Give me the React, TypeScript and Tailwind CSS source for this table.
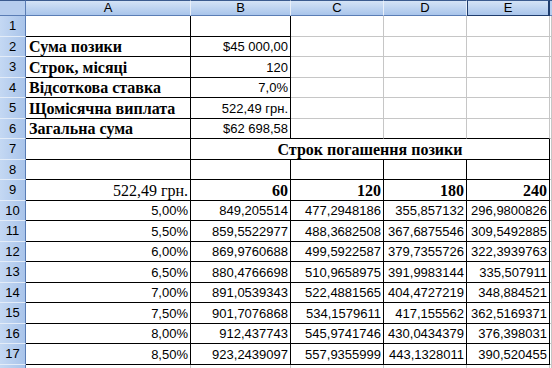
import React from "react";

type CellKind = "label" | "num" | "serifNum" | "boldNum" | "title" | "empty";

const info: [string, string][] = [
  ["", ""],
  ["Сума позики", "$45 000,00"],
  ["Строк, місяці", "120"],
  ["Відсоткова ставка", "7,0%"],
  ["Щомісячна виплата", "522,49 грн."],
  ["Загальна сума", "$62 698,58"],
];

const table: string[][] = [
  ["5,00%", "849,205514", "477,2948186", "355,857132", "296,9800826"],
  ["5,50%", "859,5522977", "488,3682508", "367,6875546", "309,5492885"],
  ["6,00%", "869,9760688", "499,5922587", "379,7355726", "322,3939763"],
  ["6,50%", "880,4766698", "510,9658975", "391,9983144", "335,507911"],
  ["7,00%", "891,0539343", "522,4881565", "404,4727219", "348,884521"],
  ["7,50%", "901,7076868", "534,1579611", "417,155562", "362,5169371"],
  ["8,00%", "912,437743", "545,9741746", "430,0434379", "376,398031"],
  ["8,50%", "923,2439097", "557,9355999", "443,1328011", "390,520455"],
];

const kindClasses: Record<CellKind, string> = {
  label: "[font-family:'Liberation_Serif',serif] font-bold text-[16px] justify-start pl-[3px]",
  num: "[font-family:'Liberation_Sans',sans-serif] text-[13px] justify-end pr-[2px]",
  serifNum: "[font-family:'Liberation_Serif',serif] text-[16px] justify-end pr-[2px]",
  boldNum: "[font-family:'Liberation_Serif',serif] font-bold text-[16px] justify-end pr-[2px]",
  title: "[font-family:'Liberation_Serif',serif] font-bold text-[16px] justify-center",
  empty: "",
};

// A1:B6 and A7:E17 carry black borders, the rest is plain grid
function bordered(r: number, c: number) {
  if (r >= 1 && r <= 6 && c >= 1 && c <= 2) return true;
  if (r >= 7 && r <= 17 && c >= 1 && c <= 5) return true;
  return false;
}

function Cell({
  r,
  c,
  lastCol,
  kind = "empty",
  span,
  children,
}: {
  r: number;
  c: number;
  lastCol?: number;
  kind?: CellKind;
  span?: boolean;
  children?: React.ReactNode;
}) {
  const endCol = lastCol ?? c;
  const right = bordered(r, endCol) || bordered(r, endCol + 1);
  const bottom = bordered(r, c) || bordered(r + 1, c);
  return (
    <div
      className={`flex items-end overflow-hidden whitespace-nowrap pb-[1px] leading-[17px] text-black border-r border-b ${
        right ? "border-r-black" : "border-r-[#c6c6c6]"
      } ${bottom ? "border-b-black" : "border-b-[#c6c6c6]"} ${span ? "col-span-4" : ""} ${kindClasses[kind]}`}
    >
      {children}
    </div>
  );
}

function RowHead({ n }: { n?: number }) {
  return (
    <div className="flex items-center justify-center [font-family:'Liberation_Sans',sans-serif] text-[13px] text-black bg-gradient-to-r from-[#c4d8f3] to-[#a9c4ea] border-r border-r-[#5a7db5] border-b border-b-[#e3ecf8]">
      {n}
    </div>
  );
}

function ColHead({ label, active }: { label: string; active?: boolean }) {
  return (
    <div
      className={`flex items-center justify-center [font-family:'Liberation_Sans',sans-serif] text-[13px] text-black bg-gradient-to-b from-[#d4e3f6] to-[#a9c5eb] border-t border-t-[#3b5b8f] border-b ${
        active
          ? "border-b-[#1f3d6e] border-r-2 border-r-[#1f3d6e] border-l border-l-[#1f3d6e]"
          : "border-b-[#5a7db5] border-r border-r-[#e8eff9]"
      }`}
    >
      {label}
    </div>
  );
}

export default function App() {
  const cols = ["A", "B", "C", "D", "E"];
  return (
    <div className="w-[552px] h-[368px] overflow-hidden bg-white">
      <div className="grid grid-cols-[26px_165px_100px_93px_83px_83px_2px] grid-rows-[16px_repeat(18,20.5px)]">
        <div className="bg-[#b6cdee] border-t border-t-[#3b5b8f] border-r border-r-[#5a7db5] border-b border-b-[#5a7db5]" />
        {cols.map((col) => (
          <ColHead key={col} label={col} active={col === "E"} />
        ))}
        <div className="bg-[#b6cdee] border-t border-t-[#3b5b8f] border-b border-b-[#5a7db5]" />

        {info.map(([label, value], i) => {
          const r = i + 1;
          return (
            <React.Fragment key={r}>
              <RowHead n={r} />
              <Cell r={r} c={1} kind="label">
                {label}
              </Cell>
              <Cell r={r} c={2} kind="num">
                {value}
              </Cell>
              <Cell r={r} c={3} />
              <Cell r={r} c={4} />
              <Cell r={r} c={5} />
              <Cell r={r} c={6} />
            </React.Fragment>
          );
        })}

        <RowHead n={7} />
        <Cell r={7} c={1} />
        <Cell r={7} c={2} lastCol={5} kind="title" span>
          Строк погашення позики
        </Cell>
        <Cell r={7} c={6} />

        <RowHead n={8} />
        {[1, 2, 3, 4, 5, 6].map((c) => (
          <Cell key={c} r={8} c={c} />
        ))}

        <RowHead n={9} />
        <Cell r={9} c={1} kind="serifNum">
          522,49 грн.
        </Cell>
        {["60", "120", "180", "240"].map((v, i) => (
          <Cell key={v} r={9} c={i + 2} kind="boldNum">
            {v}
          </Cell>
        ))}
        <Cell r={9} c={6} />

        {table.map((row, i) => {
          const r = i + 10;
          return (
            <React.Fragment key={r}>
              <RowHead n={r} />
              {row.map((v, j) => (
                <Cell key={j} r={r} c={j + 1} kind="num">
                  {v}
                </Cell>
              ))}
              <Cell r={r} c={6} />
            </React.Fragment>
          );
        })}

        {/* row 18 only peeks in at the bottom edge */}
        <RowHead />
        {[1, 2, 3, 4, 5, 6].map((c) => (
          <Cell key={c} r={18} c={c} />
        ))}
      </div>
    </div>
  );
}
